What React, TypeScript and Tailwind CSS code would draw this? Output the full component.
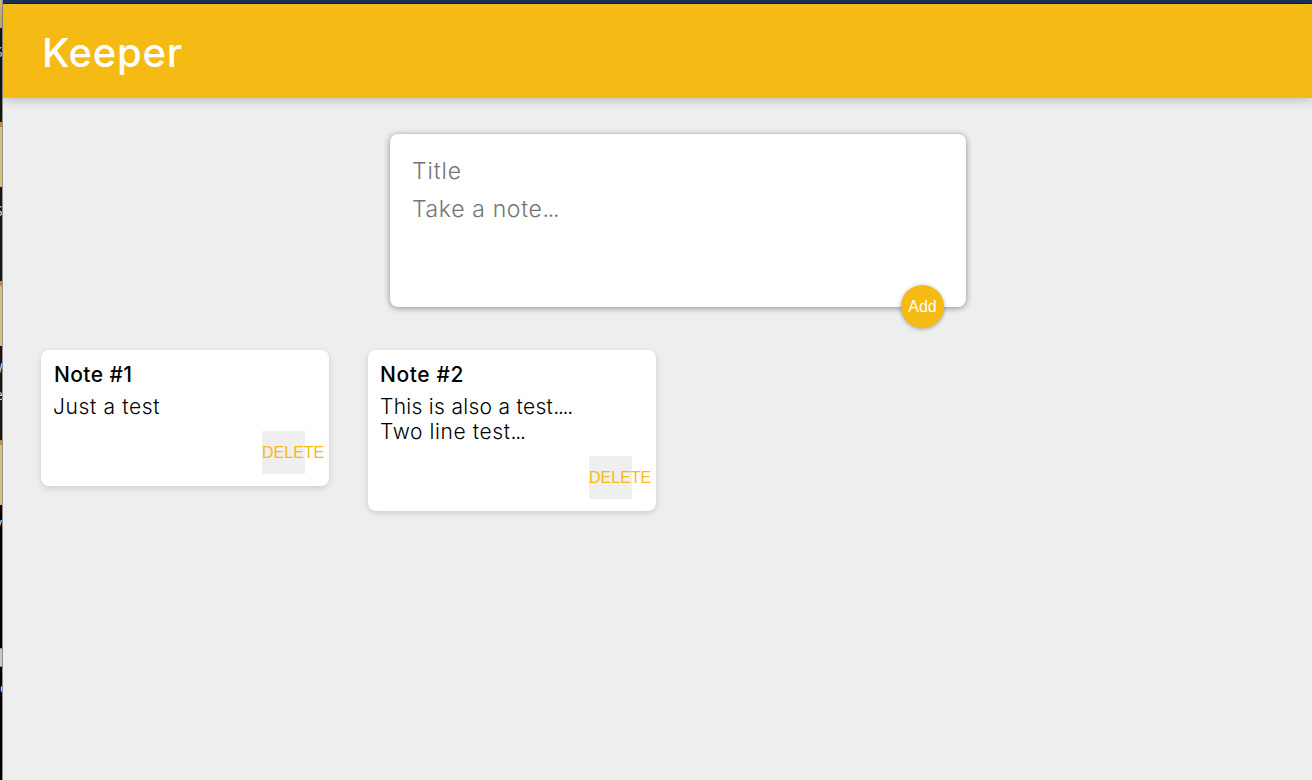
import React from "react";

type Segment = { height: string; fill: string; labels?: { text: string; pos: string }[] };

const folder = "bg-[#d8bf73] border-t-[5px] border-[#b8942f]";

const desktop: Segment[] = [
  { height: "h-[28px]", fill: "bg-[#d8bf73]" },
  { height: "h-[94px]", fill: "bg-[#151516]", labels: [{ text: "S", pos: "mt-[15px] -ml-[5px]" }] },
  { height: "h-[65px]", fill: folder },
  { height: "h-[94px]", fill: "bg-[#151516]", labels: [{ text: "S", pos: "mt-[15px] -ml-[5px]" }] },
  { height: "h-[65px]", fill: folder },
  {
    height: "h-[94px]",
    fill: "bg-[#1b1613]",
    labels: [
      { text: "W", pos: "mt-[13px] -ml-[10px]" },
      { text: "e", pos: "mt-[9px] -ml-[5px]" },
    ],
  },
  { height: "h-[65px]", fill: folder },
  { height: "h-[143px]", fill: "bg-black", labels: [{ text: "y", pos: "mt-[9px] -ml-[5px]" }] },
  { height: "h-[19px]", fill: "bg-[#c9c9c9] border-y border-[#8a8a8a]" },
  { height: "h-[113px]", fill: "bg-black", labels: [{ text: "c", pos: "mt-[12px] ml-0" }] },
];

type Line = { text: string; dots: string; spacing: string };

const notes: { title: string; spacing: string; lines: Line[] }[] = [
  {
    title: "Note #1",
    spacing: "pl-px tracking-[0.4px]",
    lines: [{ text: "Just a test", dots: "", spacing: "tracking-[0.65px]" }],
  },
  {
    title: "Note #2",
    spacing: "tracking-[0.6px]",
    lines: [
      { text: "This is also a test", dots: "....", spacing: "tracking-[0.3px]" },
      { text: "Two line test", dots: "...", spacing: "tracking-[0.6px]" },
    ],
  },
];

function DesktopEdge() {
  return (
    <div className="w-[3px] shrink-0 overflow-hidden border-r border-[#555555]/60">
      {desktop.map((s, i) => (
        <div key={i} className={`${s.height} ${s.fill} flex flex-col overflow-hidden`}>
          {s.labels?.map((l) => (
            <div key={l.text} className={`${l.pos} h-[18px] w-[16px] font-['Open_Sans',sans-serif] text-[14px] leading-[18px] text-[#d5e6f5]`}>
              {l.text}
            </div>
          ))}
        </div>
      ))}
    </div>
  );
}

function Note({ title, spacing, lines }: { title: string; spacing: string; lines: Line[] }) {
  return (
    <article className="w-[288px] rounded-[8px] bg-white p-[12px] shadow-[0_2px_6px_#cccccc]">
      <h2 className={`mb-[7px] h-[25px] text-[21px] leading-[25px] font-medium whitespace-nowrap ${spacing}`}>{title}</h2>
      {lines.map((line) => (
        <p key={line.text} className={`h-[25px] text-[21px] leading-[25px] font-light whitespace-nowrap ${line.spacing}`}>
          {line.text}
          <span className="tracking-[-1.2px]">{line.dots}</span>
        </p>
      ))}
      <div className="mt-[12px] flex justify-end pr-[12px]">
        <button className="flex h-[43px] w-[43px] items-center bg-[#efefef] font-['Liberation_Sans',Arial,sans-serif] text-[16px] text-[#f5ba13]">DELETE</button>
      </div>
    </article>
  );
}

export default function App() {
  return (
    <div className="flex h-[780px] w-full overflow-hidden bg-[#eeeeee] font-['Inter',sans-serif] text-black">
      <DesktopEdge />
      <div className="flex min-w-0 flex-1 flex-col">
        <div className="h-[4px] shrink-0 border-b border-[#0f2440] bg-[#17365f]" />
        <header className="flex h-[94px] shrink-0 items-center bg-[#f5ba13] pt-[3px] pl-[39px] shadow-[0_0_12px_rgba(0,0,0,0.3)]">
          <h1 className="text-[40px] leading-[60px] font-medium tracking-[0.7px] text-white">Keeper</h1>
        </header>
        <main>
          <form
            className="relative mt-[36px] ml-[387px] flex h-[173px] w-[576px] flex-col rounded-[8px] bg-white pt-[22px] pl-[22px] shadow-[0_1px_6px_rgb(138,137,137)]"
            onSubmit={(e) => e.preventDefault()}
          >
            <label className="h-[30px] text-[23px] leading-[30px] font-light tracking-[0.9px] text-[#757575]">Title</label>
            <label className="mt-[8px] h-[30px] text-[23px] leading-[30px] font-light tracking-[0.65px] text-[#757575]">
              Take a note<span className="tracking-[-1.2px]">...</span>
            </label>
            <button className="absolute right-[22px] bottom-[-21px] h-[43px] w-[43px] rounded-full bg-[#f5ba13] font-['Liberation_Sans',Arial,sans-serif] text-[16px] text-white shadow-[0_1px_4px_rgba(0,0,0,0.35)]">
              Add
            </button>
          </form>
          <section className="mt-[43px] flex items-start gap-[39px] pl-[38px]">
            {notes.map((n) => (
              <Note key={n.title} title={n.title} spacing={n.spacing} lines={n.lines} />
            ))}
          </section>
        </main>
      </div>
    </div>
  );
}
